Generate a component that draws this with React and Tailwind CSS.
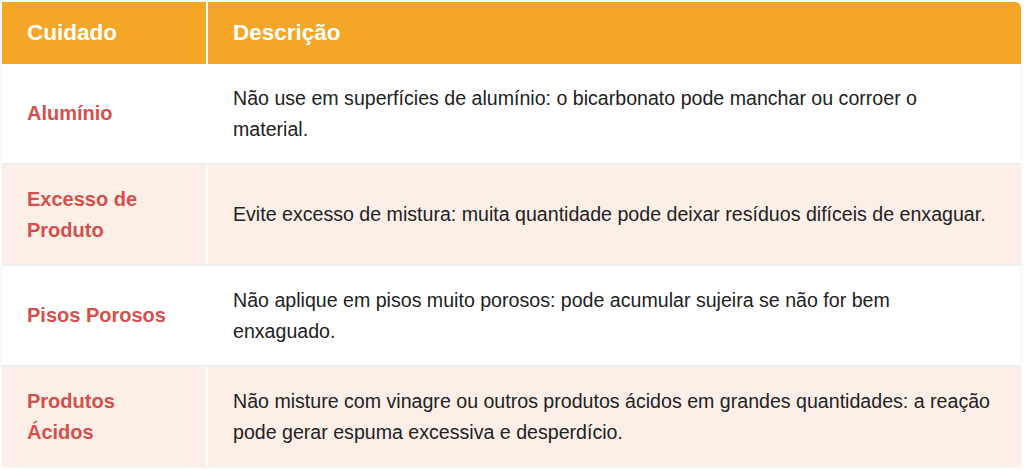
import React from 'react'

const rows = [
  { label: 'Alumínio', text: 'Não use em superfícies de alumínio: o bicarbonato pode manchar ou corroer o material.' },
  { label: 'Excesso de Produto', text: 'Evite excesso de mistura: muita quantidade pode deixar resíduos difíceis de enxaguar.' },
  { label: 'Pisos Porosos', text: 'Não aplique em pisos muito porosos: pode acumular sujeira se não for bem enxaguado.' },
  { label: 'Produtos Ácidos', text: 'Não misture com vinagre ou outros produtos ácidos em grandes quantidades: a reação pode gerar espuma excessiva e desperdício.' },
]

export default function App(){
  return (
    <div className="w-[1024px] h-[470px] bg-white p-[2px] pr-[3px]" style={{fontFamily: '"Liberation Sans", Arial, sans-serif'}}>
      <div className="rounded-tr-md overflow-hidden shadow-[0_1px_3px_rgba(0,0,0,0.08)]">
        <div className="grid grid-cols-[204px_1fr] gap-x-[2px] h-[62px] text-white font-bold text-[22.5px]">
          <div className="bg-[#f4a626] flex items-center pl-[25px]">Cuidado</div>
          <div className="bg-[#f4a626] flex items-center pl-[25px]">Descrição</div>
        </div>
        {rows.map((r, i) => (
          <div key={r.label} className={`grid grid-cols-[204px_1fr] gap-x-[2px] ${i > 0 ? 'h-[101px] border-t-2 border-[#eef0ef]' : 'h-[99px]'}`}>
            <div className={`${i % 2 ? 'bg-[#fcefe8]' : 'bg-white'} flex items-center pl-[25px] pr-6 text-[#d4504c] font-bold text-[20px] leading-[31px]`}>
              {r.label}
            </div>
            <div className={`${i % 2 ? 'bg-[#fcefe8]' : 'bg-white'} flex items-center pl-[25px] pr-7 text-[#222] text-[19.6px] leading-[31px]`}>
              {r.text}
            </div>
          </div>
        ))}
      </div>
    </div>
  )
}
